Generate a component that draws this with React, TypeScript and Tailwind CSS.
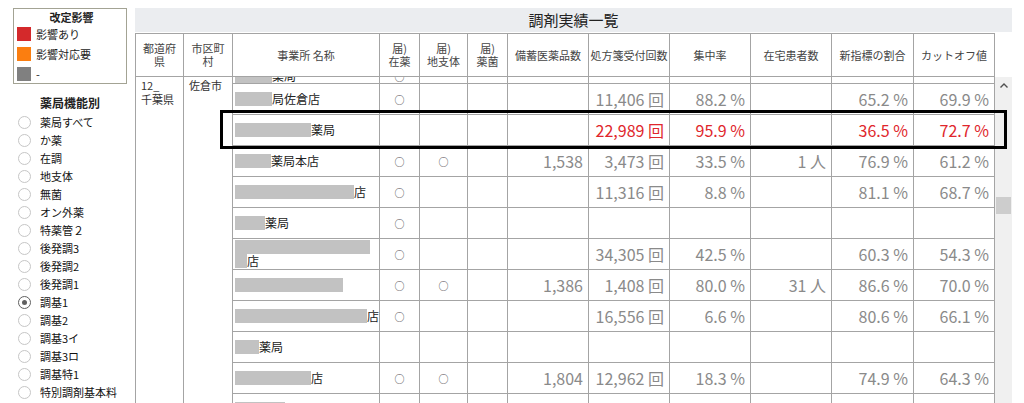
import React from "react";

type Seg = { b?: number; t?: string };
type Row = {
  lines: Seg[][];
  z?: boolean;
  c?: boolean;
  stock?: string;
  rx?: string;
  conc?: string;
  home?: string;
  ratio?: string;
  cut?: string;
  red?: boolean;
  partial?: boolean;
};

const rows: Row[] = [
  { lines: [[{ b: 37 }, { t: "薬局" }]], z: true, partial: true },
  { lines: [[{ b: 37 }, { t: "局佐倉店" }]], z: true, rx: "11,406 回", conc: "88.2 %", ratio: "65.2 %", cut: "69.9 %" },
  { lines: [[{ b: 76 }, { t: "薬局" }]], red: true, rx: "22,989 回", conc: "95.9 %", ratio: "36.5 %", cut: "72.7 %" },
  { lines: [[{ b: 36 }, { t: "薬局本店" }]], z: true, c: true, stock: "1,538", rx: "3,473 回", conc: "33.5 %", home: "1 人", ratio: "76.9 %", cut: "61.2 %" },
  { lines: [[{ b: 119 }, { t: "店" }]], z: true, rx: "11,316 回", conc: "8.8 %", ratio: "81.1 %", cut: "68.7 %" },
  { lines: [[{ b: 30 }, { t: "薬局" }]], z: true },
  { lines: [[{ b: 135 }], [{ b: 12 }, { t: "店" }]], z: true, rx: "34,305 回", conc: "42.5 %", ratio: "60.3 %", cut: "54.3 %" },
  { lines: [[{ b: 108 }]], z: true, c: true, stock: "1,386", rx: "1,408 回", conc: "80.0 %", home: "31 人", ratio: "86.6 %", cut: "70.0 %" },
  { lines: [[{ b: 132 }, { t: "店" }]], z: true, rx: "16,556 回", conc: "6.6 %", ratio: "80.6 %", cut: "66.1 %" },
  { lines: [[{ b: 24 }, { t: "薬局" }]] },
  { lines: [[{ b: 76 }, { t: "店" }]], z: true, c: true, stock: "1,804", rx: "12,962 回", conc: "18.3 %", ratio: "74.9 %", cut: "64.3 %" },
  { lines: [[{ b: 50 }, { t: "薬局" }]] },
];

const radios = [
  "薬局すべて",
  "か薬",
  "在調",
  "地支体",
  "無菌",
  "オン外薬",
  "特薬管２",
  "後発調3",
  "後発調2",
  "後発調1",
  "調基1",
  "調基2",
  "調基3イ",
  "調基3ロ",
  "調基特1",
  "特別調剤基本料",
];

function Num({ v, w, red }: { v?: string; w: string; red?: boolean }) {
  return (
    <div
      className={`${w} h-full shrink-0 border-r border-[#a4a4a4] flex items-center justify-end pr-[5px] text-[16px] whitespace-nowrap ${
        red ? "text-[#e0262c]" : "text-[#8a8a8a]"
      }`}
    >
      {v}
    </div>
  );
}

function Mark({ on, w }: { on?: boolean; w: string }) {
  return (
    <div className={`${w} h-full shrink-0 border-r border-[#a4a4a4] flex items-center justify-center text-[10px] text-[#444]`}>
      {on ? "○" : ""}
    </div>
  );
}

function HeadCell({ w, children }: { w: string; children: React.ReactNode }) {
  return (
    <div className={`${w} h-full shrink-0 border-r border-b border-[#a4a4a4] flex items-center justify-center text-center text-[11px] leading-[13px] text-[#444]`}>
      <div>{children}</div>
    </div>
  );
}

export default function App() {
  return (
    <div className="relative w-[1024px] h-[403px] overflow-hidden bg-white flex font-['Noto_Sans_CJK_JP','Meiryo',sans-serif] text-[#222]">
      {/* Sidebar */}
      <div className="w-[135px] shrink-0 pt-[8px]">
        <div className="ml-[13px] w-[114px] h-[76px] border border-[#a3a394] pl-[3px]">
          <div className="h-[16px] text-center text-[11px] font-bold leading-[16px]">改定影響</div>
          <div className="flex flex-col gap-[6px] mt-[2px]">
            <div className="flex items-center gap-[5px] h-[14px]">
              <span className="w-[14px] h-[14px] bg-[#d4292b]" />
              <span className="text-[11px]">影響あり</span>
            </div>
            <div className="flex items-center gap-[5px] h-[14px]">
              <span className="w-[14px] h-[14px] bg-[#fb7e10]" />
              <span className="text-[11px]">影響対応要</span>
            </div>
            <div className="flex items-center gap-[5px] h-[14px]">
              <span className="w-[14px] h-[14px] bg-[#808080]" />
              <span className="text-[11px]">-</span>
            </div>
          </div>
        </div>
        <div className="mt-[9px] h-[20px] pl-[40px] text-[12px] font-bold leading-[20px]">薬局機能別</div>
        <div className="flex flex-col">
          {radios.map((r) => {
            const on = r === "調基1";
            return (
              <div key={r} className="h-[18px] flex items-center">
                <span
                  className={`ml-[18px] w-[13px] h-[13px] rounded-full border flex items-center justify-center ${
                    on ? "border-[#606060]" : "border-[#c6c6c6]"
                  }`}
                >
                  {on && <span className="w-[5px] h-[5px] rounded-full bg-[#606060]" />}
                </span>
                <span className="ml-[9px] text-[11px] text-[#111] whitespace-nowrap">{r}</span>
              </div>
            );
          })}
        </div>
      </div>

      {/* Main */}
      <div className="w-[877px] shrink-0 pt-[8px] flex flex-col">
        <div className="h-[24px] bg-[#ebedf0] flex items-center justify-center text-[15px] text-[#222]">調剤実績一覧</div>
        <div className="mt-[1px] w-[860px] h-[44px] border-t border-l border-[#a4a4a4] flex">
          <HeadCell w="w-[48px]">都道府<br />県</HeadCell>
          <HeadCell w="w-[49px]">市区町<br />村</HeadCell>
          <HeadCell w="w-[147px]">事業所 名称</HeadCell>
          <HeadCell w="w-[40px]">届)<br />在薬</HeadCell>
          <HeadCell w="w-[48px]">届)<br />地支体</HeadCell>
          <HeadCell w="w-[40px]">届)<br />薬菌</HeadCell>
          <HeadCell w="w-[81px]">備蓄医薬品数</HeadCell>
          <HeadCell w="w-[81px]">処方箋受付回数</HeadCell>
          <HeadCell w="w-[81px]">集中率</HeadCell>
          <HeadCell w="w-[81px]">在宅患者数</HeadCell>
          <HeadCell w="w-[82px]">新指標の割合</HeadCell>
          <HeadCell w="w-[81px]">カットオフ値</HeadCell>
        </div>
        <div className="flex flex-1 min-h-0">
          {/* frozen columns */}
          <div className="flex border-l border-[#a4a4a4] h-full">
            <div className="w-[48px] h-full border-r border-[#a4a4a4] pl-[5px] pt-[1px] text-[11px] leading-[14px] text-[#333]">
              12_<br />千葉県
            </div>
            <div className="w-[49px] h-full border-r border-[#a4a4a4] pl-[5px] pt-[1px] text-[11px] leading-[14px] text-[#333]">
              佐倉市
            </div>
          </div>
          {/* scrolled rows */}
          <div className="w-[762px] h-full overflow-hidden">
            <div className="-mt-[24px]">
              {rows.map((r, i) => (
                <div key={i} className={`flex h-[31px] border-b border-[#a4a4a4] ${r.partial ? "pt-[16px]" : ""}`}>
                  <div className="w-[147px] h-full shrink-0 border-r border-[#a4a4a4] flex flex-col justify-center pl-[2px] text-[12px] leading-[14px] text-[#222]">
                    {r.lines.map((ln, j) => (
                      <div key={j} className="flex items-center whitespace-nowrap">
                        {ln.map((s, k) =>
                          s.b ? (
                            <span key={k} className="inline-block h-[14px] bg-[#c2c2c2]" style={{ width: s.b }} />
                          ) : (
                            <span key={k}>{s.t}</span>
                          )
                        )}
                      </div>
                    ))}
                  </div>
                  <Mark w="w-[40px]" on={r.z} />
                  <Mark w="w-[48px]" on={r.c} />
                  <Mark w="w-[40px]" />
                  <Num w="w-[81px]" v={r.stock} />
                  <Num w="w-[81px]" v={r.rx} red={r.red} />
                  <Num w="w-[81px]" v={r.conc} red={r.red} />
                  <Num w="w-[81px]" v={r.home} />
                  <Num w="w-[82px]" v={r.ratio} red={r.red} />
                  <Num w="w-[81px]" v={r.cut} red={r.red} />
                </div>
              ))}
            </div>
          </div>
          {/* scrollbar */}
          <div className="w-[17px] h-full bg-[#f0f0f0] flex flex-col items-center">
            <div className="h-[17px] flex items-center justify-center">
              <svg width="8" height="5" viewBox="0 0 8 5">
                <path d="M0.5 4.5 L4 1 L7.5 4.5" fill="none" stroke="#505050" strokeWidth="1.4" />
              </svg>
            </div>
            <div className="mt-[103px] w-[15px] h-[17px] bg-[#cdcdcd]" />
          </div>
        </div>
      </div>

      {/* highlight box */}
      <div className="absolute left-[220px] top-[110px] w-[787px] h-[39px] border-[3px] border-black pointer-events-none" />
    </div>
  );
}
